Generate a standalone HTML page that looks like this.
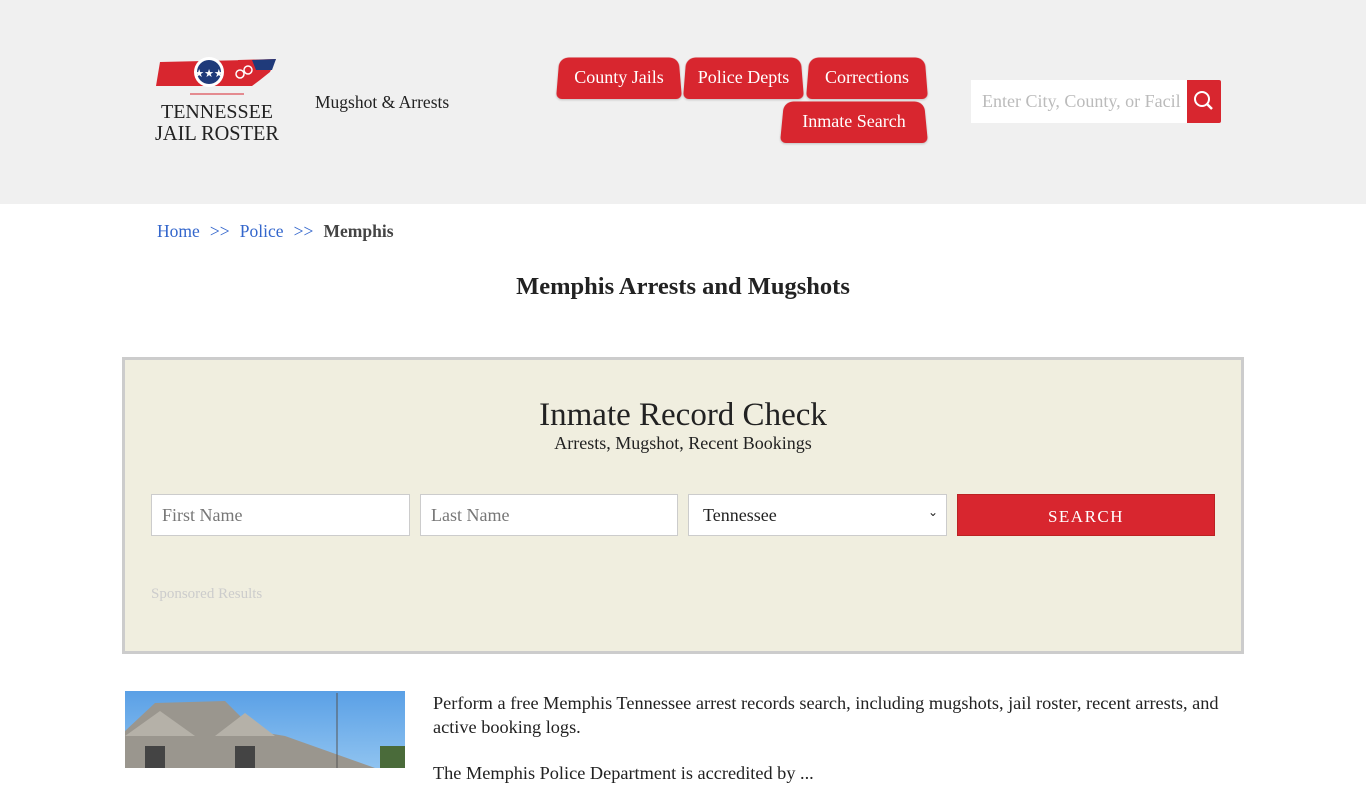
<!DOCTYPE html>
<html><head><meta charset="utf-8"><style>
*{margin:0;padding:0;box-sizing:border-box}
html,body{width:1366px;height:768px;overflow:hidden}
body{background:#fff;font-family:"Liberation Serif",serif;color:#222}
header{height:204px;background:#f0f0f0;position:relative}
.logo{position:absolute;left:152px;top:56px;width:130px;height:90px}
.tag{position:absolute;left:315px;top:92px;font-size:17.5px}
.tab{position:absolute;height:44px;color:#fff;font-size:18px;text-align:center;line-height:44px}
.tab:before{content:"";position:absolute;inset:0;background:#d8262f;border-radius:10px 10px 6px 6px;transform:perspective(40px) rotateX(3deg);transform-origin:bottom;z-index:0;box-shadow:0 1px 2px rgba(0,0,0,.2)}
.tab span{position:relative}
.srch{position:absolute;left:971px;top:80px;width:216px;height:43px;background:#fff;color:#bbb;font-size:18px;padding:11px 0 0 11px;white-space:nowrap;overflow:hidden}
.sbtn{position:absolute;left:1187px;top:80px;width:34px;height:43px;background:#d8262f;border-radius:0 2px 2px 0}
.bc{position:absolute;top:221px;left:157px;font-size:17.5px;color:#3366cc;word-spacing:-1px}
.bc b{color:#444}
h1{position:absolute;top:273px;width:100%;text-align:center;font-size:24.5px;font-weight:bold}
.box{position:absolute;left:122px;top:357px;width:1122px;height:297px;background:#f0eedf;border:3px solid #ccc}
.box h2{position:absolute;top:37px;width:100%;text-align:center;font-weight:normal;font-size:33px}
.box p{position:absolute;top:73px;width:100%;text-align:center;font-size:18px}
.in{position:absolute;top:134px;height:42px;background:#fff;border:1px solid #ccc;font-size:18px;color:#777;padding:10px 10px}
.go{position:absolute;left:832px;top:134px;width:258px;height:42px;background:#d8262f;color:#fff;font-size:17px;letter-spacing:1.5px;text-align:center;line-height:44px;border:1px solid #b22}
.sp{position:absolute;left:26px;top:226px;color:#ccc;font-size:15px}
.img{position:absolute;left:125px;top:691px;width:280px;height:77px;background:linear-gradient(#5aa0e6,#8fc3f0);overflow:hidden}
.txt{position:absolute;left:433px;top:691px;width:790px;font-size:18.3px;line-height:24px}
</style></head><body>
<header>
<svg class="logo" viewBox="0 0 130 90"><polygon points="8,6 96,4 98,8 86,30 4,30" fill="#d8262f"/><polygon points="86,4 124,3 118,16 108,24 100,30 84,30" fill="#d8262f"/><polygon points="100,4 124,3 120,14 104,14" fill="#1f3a7a"/><circle cx="57" cy="16" r="15" fill="#fff"/><circle cx="57" cy="16" r="12" fill="#1f3a7a"/><text x="57" y="21" font-size="11" fill="#fff" text-anchor="middle">★★★</text><circle cx="88" cy="18" r="4" fill="none" stroke="#fff" stroke-width="1.5"/><circle cx="96" cy="14" r="4" fill="none" stroke="#fff" stroke-width="1.5"/><line x1="38" y1="38" x2="92" y2="38" stroke="#d8262f"/><text x="65" y="62" font-size="20" text-anchor="middle" fill="#222" font-family="Liberation Serif" textLength="112" lengthAdjust="spacingAndGlyphs">TENNESSEE</text><text x="65" y="84" font-size="21" text-anchor="middle" fill="#222" font-family="Liberation Serif" textLength="124" lengthAdjust="spacingAndGlyphs">JAIL ROSTER</text></svg>
<div class="tag">Mugshot &amp; Arrests</div>
<div class="tab" style="left:556px;top:55px;width:126px"><span>County Jails</span></div>
<div class="tab" style="left:683px;top:55px;width:121px"><span>Police Depts</span></div>
<div class="tab" style="left:806px;top:55px;width:122px"><span>Corrections</span></div>
<div class="tab" style="left:780px;top:99px;width:148px"><span>Inmate Search</span></div>
<div class="srch">Enter City, County, or Facil</div>
<div class="sbtn"><svg width="34" height="43"><circle cx="15" cy="19" r="7" fill="none" stroke="#fff" stroke-width="2"/><line x1="20" y1="24" x2="25" y2="29" stroke="#fff" stroke-width="2.5"/></svg></div>
</header>
<div class="bc">Home &nbsp;&nbsp;&gt;&gt;&nbsp;&nbsp; Police &nbsp;&nbsp;&gt;&gt;&nbsp;&nbsp; <b>Memphis</b></div>
<h1>Memphis Arrests and Mugshots</h1>
<div class="box">
<h2>Inmate Record Check</h2>
<p>Arrests, Mugshot, Recent Bookings</p>
<div class="in" style="left:26px;width:259px">First Name</div>
<div class="in" style="left:295px;width:258px">Last Name</div>
<div class="in" style="left:563px;width:259px;color:#222;padding-left:14px">Tennessee<span style="position:absolute;right:8px;font-size:12px">&#8964;</span></div>
<div class="go">SEARCH</div>
<div class="sp">Sponsored Results</div>
</div>
<div class="img"><svg width="280" height="77"><polygon points="0,40 30,12 100,10 130,40 160,45 250,77 0,77" fill="#9a968e"/><polygon points="0,45 35,20 70,45" fill="#b5b1a8"/><polygon points="90,45 120,22 150,45" fill="#b5b1a8"/><rect x="20" y="55" width="20" height="22" fill="#444"/><rect x="110" y="55" width="20" height="22" fill="#444"/><line x1="212" y1="2" x2="212" y2="77" stroke="#555"/><rect x="255" y="55" width="25" height="22" fill="#4a6b3a"/></svg></div>
<div class="txt">Perform a free Memphis Tennessee arrest records search, including mugshots, jail roster, recent arrests, and active booking logs.<div style="margin-top:22px">The Memphis Police Department is accredited by ...</div></div>
</body></html>
